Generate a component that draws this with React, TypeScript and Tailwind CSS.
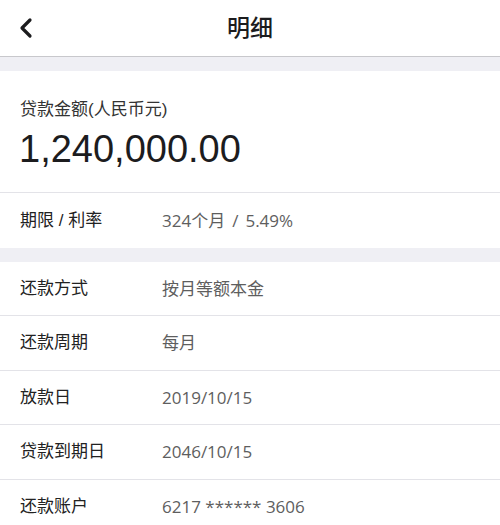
import { ChevronLeft } from 'lucide-react';

const rows = [
    { label: '还款方式', value: '按月等额本金' },
    { label: '还款周期', value: '每月' },
    { label: '放款日', value: '2019/10/15' },
    { label: '贷款到期日', value: '2046/10/15' },
    { label: '还款账户', value: '6217 ****** 3606' },
];

const valueFont = { fontFamily: '"Open Sans", "Noto Sans CJK SC", sans-serif' };

function Row({ label, children, last }: { label: string; children: React.ReactNode; last?: boolean }) {
    return (
        <div className={last ? 'flex items-center h-[54.5px] px-5' : 'flex items-center h-[54.5px] px-5 border-b border-[#e3e3e8]'}>
            <div className="w-[142px] text-[17px] text-[#222]">{label}</div>
            <div className="text-[17px] text-[#5e5e5e]" style={valueFont}>
                {children}
            </div>
        </div>
    );
}

export default function App() {
    return (
        <div
            className="w-[500px] h-[525px] overflow-hidden bg-white"
            style={{ fontFamily: '"Liberation Sans", "Noto Sans CJK SC", sans-serif' }}
        >
            {/* Nav bar */}
            <div className="grid grid-cols-[60px_1fr_60px] items-center h-[57px] border-b border-[#c8c8cc]">
                <div className="pl-[10px] flex items-center">
                    <ChevronLeft className="w-[32px] h-[32px] text-[#1c1c1e]" strokeWidth={2.4} />
                </div>
                <div className="text-center text-[23px] font-medium text-[#1c1c1e]">明细</div>
                <div />
            </div>

            <div className="h-[14px] bg-[#efeff4]" />

            {/* Amount */}
            <div className="h-[122px] px-5 flex flex-col justify-center border-b border-[#e3e3e8]">
                <div className="text-[17px] text-[#333] leading-none mt-[6px]">贷款金额(人民币元)</div>
                <div className="text-[38px] text-[#1c1c1e] leading-none mt-[12px] -ml-[1px]">1,240,000.00</div>
            </div>

            <Row label="期限 / 利率" last>
                324个月<span className="mx-[7px]">/</span>5.49%
            </Row>

            <div className="h-[14px] bg-[#efeff4]" />

            {rows.map((r, i) => (
                <Row key={r.label} label={r.label} last={i === rows.length - 1}>
                    {r.value}
                </Row>
            ))}
        </div>
    );
}
